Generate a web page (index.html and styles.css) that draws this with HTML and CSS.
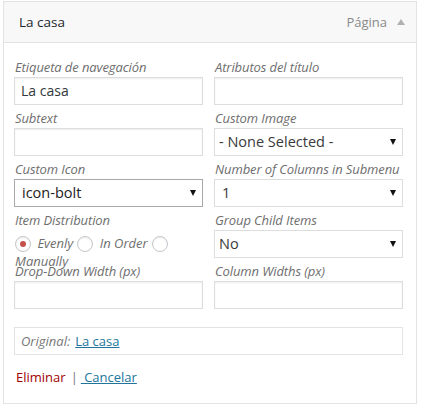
FILE: index.html
```html
<!DOCTYPE html>
<html lang="es">
<head>
<meta charset="utf-8">
<title>La casa</title>
<link rel="stylesheet" href="styles.css">
</head>
<body>
<div class="menu-item">
  <div class="item-bar">
    <span class="item-title">La casa</span>
    <span class="item-controls">
      <span class="item-type">Página</span>
      <span class="item-toggle"></span>
    </span>
  </div>
  <div class="item-settings">
    <div class="fields">
      <div class="field">
        <label class="field-label">Etiqueta de navegación</label>
        <div class="text-input">La casa</div>
      </div>
      <div class="field">
        <label class="field-label">Atributos del título</label>
        <div class="text-input"></div>
      </div>
      <div class="field">
        <label class="field-label">Subtext</label>
        <div class="text-input"></div>
      </div>
      <div class="field">
        <label class="field-label">Custom Image</label>
        <div class="select"><span>- None Selected -</span><span class="caret"></span></div>
      </div>
      <div class="field">
        <label class="field-label">Custom Icon</label>
        <div class="select select-icon"><span>icon-bolt</span><span class="caret"></span></div>
      </div>
      <div class="field">
        <label class="field-label">Number of Columns in Submenu</label>
        <div class="select"><span class="num">1</span><span class="caret"></span></div>
      </div>
      <div class="field">
        <label class="field-label">Item Distribution</label>
        <div class="radios"><label class="radio-opt"><span class="radio checked"></span> Evenly</label><label class="radio-opt"><span class="radio"></span> In Order</label><label class="radio-opt"><span class="radio"></span> Manually</label></div>
      </div>
      <div class="field">
        <label class="field-label">Group Child Items</label>
        <div class="select"><span>No</span><span class="caret"></span></div>
      </div>
      <div class="field">
        <label class="field-label">Drop-Down Width (px)</label>
        <div class="text-input"></div>
      </div>
      <div class="field">
        <label class="field-label">Column Widths (px)</label>
        <div class="text-input"></div>
      </div>
    </div>
    <div class="original">
      <span class="original-label">Original:</span>
      <a class="link" href="#">La casa</a>
    </div>
    <div class="actions"><a class="delete" href="#">Eliminar</a><span class="sep">|</span><a class="link cancel" href="#">&nbsp;Cancelar</a></div>
  </div>
</div>
</body>
</html>
```
FILE: styles.css
```css
html, body {
  margin: 0;
  padding: 0;
  background: #ffffff;
}
body {
  font-family: "Open Sans", "Liberation Sans", sans-serif;
  font-size: 13px;
  color: #32373c;
}
.menu-item {
  box-sizing: border-box;
  width: 414px;
  margin: 1px 0 0 3px;
  border: 1px solid #e3e3e3;
  background: #ffffff;
}
.item-bar {
  height: 40px;
  border-bottom: 1px solid #e3e3e3;
  background: #f8f8f8;
  display: flex;
  align-items: center;
  justify-content: space-between;
  padding: 0 11px 0 15px;
}
.item-title {
  font-size: 13.5px;
  color: #23282d;
}
.item-controls {
  display: flex;
  align-items: center;
  gap: 10px;
}
.item-type {
  font-size: 13px;
  color: #8a8a8a;
}
.item-toggle {
  width: 0;
  height: 0;
  border-left: 4.5px solid transparent;
  border-right: 4.5px solid transparent;
  border-bottom: 6px solid #b0b0b0;
}
.item-settings {
  padding: 15px 12px 16px 10px;
}
.fields {
  display: grid;
  grid-template-columns: 189px 189px;
  column-gap: 11px;
  grid-auto-rows: 51px;
}
.field {
  min-width: 0;
}
.field-label {
  display: block;
  font-style: italic;
  color: #6e6e6e;
  line-height: 19px;
  padding-left: 1px;
  white-space: nowrap;
  letter-spacing: -0.1px;
}
.text-input,
.select {
  box-sizing: border-box;
  height: 28px;
  border: 1px solid #dddddd;
  box-shadow: inset 0 1px 2px rgba(0, 0, 0, 0.07);
  background: #ffffff;
  font-size: 14px;
  color: #32373c;
  line-height: 26px;
  padding: 0 6px;
}
.select {
  display: flex;
  align-items: center;
  justify-content: space-between;
  padding: 0 6px 0 4px;
  font-size: 14.5px;
  color: #3a3a3a;
  box-shadow: none;
}
.select .num {
  padding-left: 3px;
}
.select-icon {
  border-color: #a8a8a8;
  padding-left: 7px;
  color: #222222;
}
.caret {
  width: 0;
  height: 0;
  border-left: 3.5px solid transparent;
  border-right: 3.5px solid transparent;
  border-top: 6px solid #111111;
  flex: none;
}
.radios {
  padding-top: 4px;
  line-height: 18px;
  font-style: italic;
  color: #6e6e6e;
  padding-left: 1px;
}
.radio-opt {
  cursor: pointer;
}
.radio {
  display: inline-block;
  box-sizing: border-box;
  width: 16px;
  height: 16px;
  border: 1px solid #c3c7cb;
  border-radius: 50%;
  background: #ffffff;
  box-shadow: inset 0 1px 2px rgba(0, 0, 0, 0.08);
  vertical-align: -4px;
  margin: 0 3px 0 4px;
  position: relative;
}
.radio-opt:first-child .radio {
  margin-left: 0;
}
.radio.checked::after {
  content: "";
  position: absolute;
  left: 4px;
  top: 4px;
  width: 6px;
  height: 6px;
  border-radius: 50%;
  background: #c4514b;
}
.original {
  box-sizing: border-box;
  width: 389px;
  height: 28px;
  margin-top: 14px;
  border: 1px solid #e3e3e3;
  display: flex;
  align-items: center;
  gap: 5px;
  padding: 0 6px;
}
.original-label {
  font-style: italic;
  color: #777777;
}
.link {
  color: #21759b;
  text-decoration: underline;
}
.actions {
  margin-top: 12px;
  line-height: 20px;
  padding-left: 2px;
}
.delete {
  color: #a00000;
  text-decoration: none;
}
.sep {
  color: #777777;
  margin: 0 3px 0 5px;
}
```
